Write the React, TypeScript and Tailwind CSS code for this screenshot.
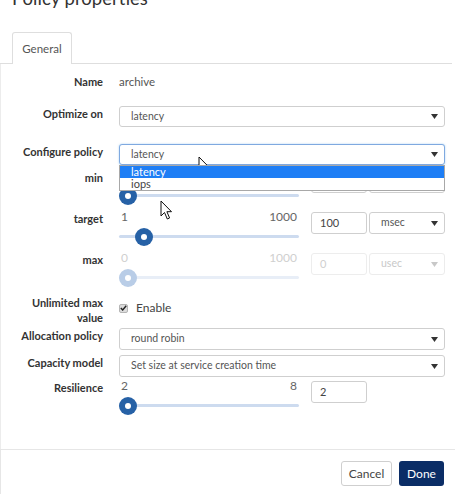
import React from 'react';

const Caret: React.FC<{ light?: boolean }> = ({ light }) => (
  <svg width="7" height="5" viewBox="0 0 7 5" className="shrink-0">
    <path d="M0 0 L7 0 L3.5 5 Z" fill={light ? '#c8c8c8' : '#333'} />
  </svg>
);

const Select: React.FC<{ value: string; focused?: boolean; disabled?: boolean; className?: string }> = ({
  value,
  focused,
  disabled,
  className = '',
}) => (
  <div
    className={`h-[21px] flex items-center justify-between pl-[11px] pr-[6px] rounded-[3px] border bg-white text-[10.5px] ${
      focused ? 'border-[#7fa9e0] shadow-[0_0_2px_rgba(102,175,233,0.6)]' : disabled ? 'border-[#ececec]' : 'border-[#cfcfcf]'
    } ${disabled ? 'text-[#c8c8c8]' : 'text-[#555]'} ${className}`}
  >
    <span>{value}</span>
    <Caret light={disabled} />
  </div>
);

const Cursor: React.FC<{ x: number; y: number }> = ({ x, y }) => (
  <svg width="13" height="21" viewBox="0 0 13 21" className="absolute pointer-events-none" style={{ left: x, top: y }}>
    <path d="M1 1 L1 16 L4.5 12.5 L7.3 19 L9.6 18 L6.9 11.7 L11.5 11.7 Z" fill="#fff" stroke="#111" strokeWidth="1" strokeLinejoin="round" />
  </svg>
);

interface SliderRowProps {
  label: string;
  min: number;
  max: number;
  value: number;
  disabled?: boolean;
  unit?: string;
}

const SliderRow: React.FC<SliderRowProps> = ({ label, min, max, value, disabled, unit }) => {
  const pct = (value - min) / (max - min);
  const thumbLeft = pct * (180 - 18);
  return (
    <div className="flex h-[41px]">
      <div className="w-[102px] text-right font-bold text-[11px] text-[#333] leading-[16px] pt-[1px]">{label}</div>
      <div className="ml-[16px] w-[180px]">
        <div className={`flex justify-between px-[2px] text-[12px] leading-[14px] ${disabled ? 'text-[#cfcfcf]' : 'text-[#666]'}`}>
          <span>{min}</span>
          <span>{max}</span>
        </div>
        <div className="relative h-[18px] mt-[4px]">
          <div className={`absolute left-0 right-0 top-[7px] h-[3px] rounded ${disabled ? 'bg-[#e8eef7]' : 'bg-[#cddbef]'}`} />
          <div
            className={`absolute top-0 w-[18px] h-[18px] rounded-full flex items-center justify-center ${
              disabled ? 'bg-[#b9cde7]' : 'bg-[#2661a6]'
            }`}
            style={{ left: thumbLeft }}
          >
            <div className="w-[6px] h-[6px] rounded-full bg-white" />
          </div>
        </div>
      </div>
      <div className="ml-[12px] pt-[2px] flex gap-[2px]">
        <div
          className={`w-[56px] h-[22px] flex items-center pl-[8px] rounded-[3px] border text-[11px] ${
            disabled ? 'border-[#ededed] text-[#cfcfcf]' : 'border-[#cfcfcf] text-[#444]'
          }`}
        >
          {value}
        </div>
        {unit && <Select value={unit} disabled={disabled} className="w-[76px] h-[22px]" />}
      </div>
    </div>
  );
};

const Label: React.FC<{ children: React.ReactNode }> = ({ children }) => (
  <div className="w-[102px] shrink-0 text-right font-bold text-[11px] text-[#333] leading-[16px]">{children}</div>
);

export default function App() {
  return (
    <div className="w-[455px] h-[494px] bg-white relative overflow-hidden flex flex-col font-['Lato','Open_Sans',sans-serif]">
      <div className="h-[24px] -mt-[14px] pl-[12px] text-[18.5px] leading-[24px] text-[#333]">Policy properties</div>

      <div className="mt-[22px] flex pl-[12px] border-b border-[#dedede] mr-[3px]">
        <div className="w-[60px] h-[32px] -mb-px bg-white border border-b-0 border-[#dedede] rounded-t-[3px] flex items-center justify-center text-[11.5px] text-[#555]">
          General
        </div>
      </div>

      <div className="flex-1 flex flex-col border-l border-[#ececec] relative">
        <div className="flex mt-[10px] items-center">
          <Label>Name</Label>
          <div className="ml-[16px] text-[11.5px] text-[#555] leading-[16px]">archive</div>
        </div>

        <div className="flex mt-[16px]">
          <Label>Optimize on</Label>
          <Select value="latency" className="ml-[16px] w-[326px]" />
        </div>

        <div className="flex mt-[17px] relative">
          <Label>Configure policy</Label>
          <Select value="latency" focused className="ml-[16px] w-[326px]" />
          <div className="absolute left-[118px] top-[21px] w-[326px] bg-white border border-[#a8a8a8] z-10 text-[11px] leading-[12px]">
            <div className="bg-[#1e7ef5] text-white pl-[11px]">latency</div>
            <div className="text-[#444] pl-[11px]">iops</div>
          </div>
        </div>

        <div className="mt-[4px]">
          <SliderRow label="min" min={1} max={1000} value={1} unit="msec" />
        </div>
        <SliderRow label="target" min={1} max={1000} value={100} unit="msec" />
        <SliderRow label="max" min={0} max={1000} value={0} unit="usec" disabled />

        <div className="flex mt-[3px] items-center">
          <div className="w-[102px] shrink-0 text-right font-bold text-[11px] text-[#333] leading-[15px]">
            Unlimited max
            <br />
            value
          </div>
          <div className="ml-[16px] flex items-center gap-[8px] -mt-[4px]">
            <span className="w-[9px] h-[9px] rounded-[2px] bg-[#dcdcdc] border border-[#b5b5b5] flex items-center justify-center">
              <svg width="7" height="6" viewBox="0 0 7 6">
                <path d="M0.8 3 L2.7 5 L6.2 0.8" fill="none" stroke="#222" strokeWidth="1.4" />
              </svg>
            </span>
            <span className="text-[12px] text-[#444]">Enable</span>
          </div>
        </div>

        <div className="flex mt-[3px]">
          <Label>Allocation policy</Label>
          <Select value="round robin" className="ml-[16px] w-[326px] h-[22px]" />
        </div>

        <div className="flex mt-[5px]">
          <Label>Capacity model</Label>
          <Select value="Set size at service creation time" className="ml-[16px] w-[326px] h-[22px]" />
        </div>

        <div className="mt-[2px]">
          <SliderRow label="Resilience" min={2} max={8} value={2} />
        </div>
      </div>

      <div className="h-[45px] shrink-0 border-t border-l border-[#e6e6e6] flex justify-end items-start pt-[11px] pr-[11px] gap-[7px]">
        <button className="w-[51px] h-[25px] rounded-[3px] border border-[#cfcfcf] bg-white text-[12px] text-[#444]">
          Cancel
        </button>
        <button className="w-[45px] h-[25px] rounded-[3px] bg-[#0b2d66] text-[12px] text-white">Done</button>
      </div>

      <Cursor x={198} y={156} />
      <Cursor x={160} y={200} />
    </div>
  );
}
